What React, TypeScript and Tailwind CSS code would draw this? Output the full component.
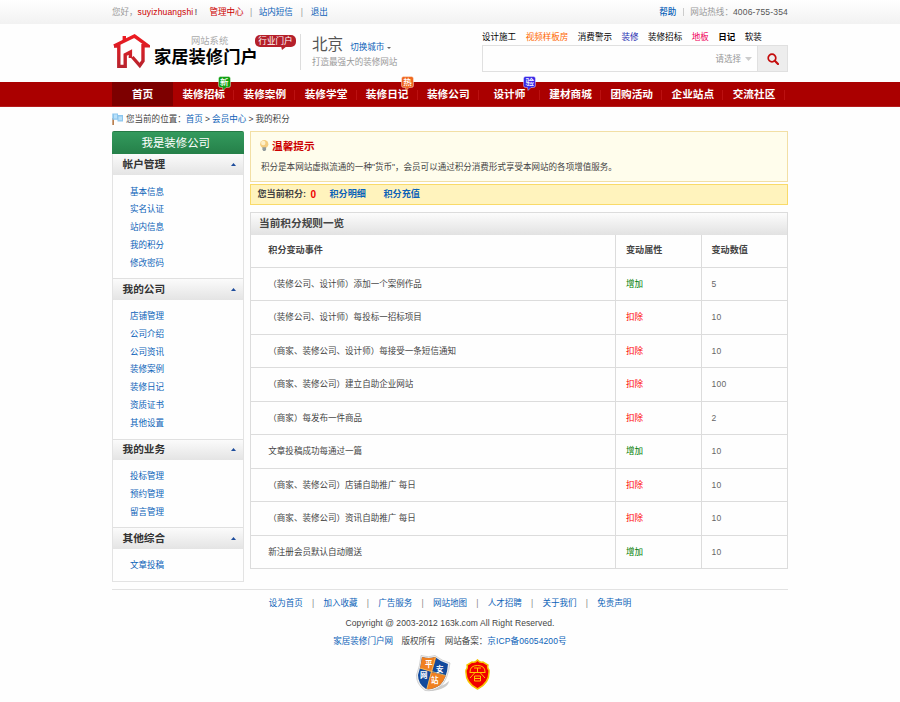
type NavItem = { label: string; tag?: string; kind?: 'new' | 'hot' | 'vip' }

const NAV: NavItem[] = [
  { label: '首页' },
  { label: '装修招标', tag: '新', kind: 'new' },
  { label: '装修案例' },
  { label: '装修学堂' },
  { label: '装修日记', tag: '热', kind: 'hot' },
  { label: '装修公司' },
  { label: '设计师', tag: '验', kind: 'vip' },
  { label: '建材商城' },
  { label: '团购活动' },
  { label: '企业站点' },
  { label: '交流社区' },
]

const TAG_FILL = { new: '#11a011', hot: '#f06a20', vip: '#3a2ae8' }

const HOT_WORDS = [
  { label: '设计施工', className: 'text-black' },
  { label: '视频样板房', className: 'text-[#ff6600]' },
  { label: '消费警示', className: 'text-black' },
  { label: '装修', className: 'text-[#1a2ab0]' },
  { label: '装修招标', className: 'text-black' },
  { label: '地板', className: 'text-[#f0005a]' },
  { label: '日记', className: 'font-bold text-black' },
  { label: '软装', className: 'text-black' },
]

const MENU = [
  { title: '帐户管理', items: ['基本信息', '实名认证', '站内信息', '我的积分', '修改密码'] },
  { title: '我的公司', items: ['店铺管理', '公司介绍', '公司资讯', '装修案例', '装修日记', '资质证书', '其他设置'] },
  { title: '我的业务', items: ['投标管理', '预约管理', '留言管理'] },
  { title: '其他综合', items: ['文章投稿'] },
]

const RULES = [
  { event: '（装修公司、设计师）添加一个案例作品', add: true, value: 5 },
  { event: '（装修公司、设计师）每投标一招标项目', add: false, value: 10 },
  { event: '（商家、装修公司、设计师）每接受一条短信通知', add: false, value: 10 },
  { event: '（商家、装修公司）建立自助企业网站', add: false, value: 100 },
  { event: '（商家）每发布一件商品', add: false, value: 2 },
  { event: '文章投稿成功每通过一篇', add: true, value: 10 },
  { event: '（商家、装修公司）店铺自助推广 每日', add: false, value: 10 },
  { event: '（商家、装修公司）资讯自助推广 每日', add: false, value: 10 },
  { event: '新注册会员默认自动赠送', add: true, value: 10 },
]

const FOOTER_LINKS = ['设为首页', '加入收藏', '广告服务', '网站地图', '人才招聘', '关于我们', '免责声明']

function TopBar() {
  return (
    <div className="h-6 bg-linear-to-b from-white to-[#f2f2f2]">
      <div className="mx-auto flex h-6 w-[676px] items-center justify-between whitespace-nowrap text-[#999]">
        <div className="flex items-center">
          <span className="w-[25.5px]">您好，</span>
          <span className="w-[57px] tracking-[0.14px] text-[#c00]">suyizhuangshi</span>
          <span className="w-[15px] font-bold text-[#777]">!</span>
          <a className="text-[#c00]">管理中心</a>
          <span className="w-[15px] text-center">|</span>
          <a className="text-[#0b62b8]">站内短信</a>
          <span className="w-[18px] text-center">|</span>
          <a className="text-[#0b62b8]">退出</a>
        </div>
        <div className="flex items-center">
          <a className="font-medium text-[#0b62b8]">帮助</a>
          <span className="mx-[6.5px] h-2 w-px bg-[#ccc]" />
          <span>网站热线：</span>
          <span className="tracking-[0.16px] text-[#555]">4006-755-354</span>
        </div>
      </div>
    </div>
  )
}

function Logo() {
  return (
    <div className="flex w-[188px] pt-[9px]">
      <svg className="mt-px h-[35px] w-[38px] shrink-0" viewBox="0 0 38 35">
        <defs>
          <linearGradient id="house" gradientUnits="userSpaceOnUse" x1="0" y1="0" x2="0" y2="35">
            <stop offset="0" stopColor="#f01a20" />
            <stop offset="1" stopColor="#b4242e" />
          </linearGradient>
        </defs>
        <g fill="none" stroke="url(#house)" strokeWidth="3.4">
          <path d="M2 12L22.5 2L36 11.8H31V27L27.8 31.5L20.3 23" />
          <path d="M2 12H6.8V32.4H13.2V20.8L18.4 18V24" />
          <path d="M12.3 8V2" />
        </g>
      </svg>
      <div className="ml-[4px] w-[101px]">
        <div className="mt-[2px] h-[13px] pl-[37px] text-[9.3px] leading-[13px] text-[#aaa]">网站系统</div>
        <div className="-mt-px text-[17.3px] font-bold leading-[20px] whitespace-nowrap text-black">家居装修门户</div>
      </div>
      <div className="relative mt-[2px] h-[12px] w-[41px] rounded-[5px] bg-[#b5202a] text-center text-[8.6px] leading-[12px] whitespace-nowrap text-white">
        行业门户
        <svg className="absolute top-[11px] left-[26px] h-[4px] w-[6px]" viewBox="0 0 6 4">
          <path d="M0 0H6L1 4Z" fill="#b5202a" />
        </svg>
      </div>
    </div>
  )
}

function Header() {
  return (
    <header className="mx-auto flex h-[58px] w-[676px]">
      <Logo />
      <div className="mt-[10px] h-[36px] border-l border-[#ddd] pl-[11px]">
        <div className="flex h-[20px] items-center">
          <span className="text-[15.6px] text-[#555]">北京</span>
          <span className="mt-[6px] ml-[7px] text-[#0b62b8]">切换城市</span>
          <svg className="mt-[7px] ml-[3px] h-[2px] w-[4px]" viewBox="0 0 4 2">
            <path d="M0 0H4L2 2Z" fill="#666" />
          </svg>
        </div>
        <div className="mt-[2px] leading-[12px] text-[#999]">打造最强大的装修网站</div>
      </div>
      <div className="ml-auto w-[306px] pt-[7px]">
        <div className="flex h-[12px] items-center gap-[9.5px] whitespace-nowrap">
          {HOT_WORDS.map(word => (
            <a key={word.label} className={word.className}>
              {word.label}
            </a>
          ))}
        </div>
        <div className="mt-[2px] flex h-[27px] border border-[#e0e0e0]">
          <div className="flex flex-1 items-center justify-end pt-px pr-[5px] text-[#999]">
            请选择
            <svg className="ml-[4px] h-[4px] w-[7px]" viewBox="0 0 7 4">
              <path d="M0 0H7L3.5 4Z" fill="#ccc" />
            </svg>
          </div>
          <button type="button" className="flex w-[30px] items-center justify-center border-l border-[#e0e0e0] bg-[#ededed]">
            <svg className="h-[12px] w-[12px]" viewBox="0 0 12 12" fill="none" stroke="#c40d0d">
              <circle cx="5" cy="5" r="3.8" strokeWidth="1.7" />
              <path d="M7.8 7.8L11 11" strokeWidth="2.2" strokeLinecap="round" />
            </svg>
          </button>
        </div>
      </div>
    </header>
  )
}

function NavTag({ tag, kind }: { tag: string; kind: 'new' | 'hot' | 'vip' }) {
  return (
    <span className="absolute -top-[6px] left-[44.5px] h-[15px] w-[13px]">
      <svg className="absolute inset-0 h-[15px] w-[13px]" viewBox="0 0 13 15">
        <path
          d="M2.5 .5H10.5Q12.5 .5 12.5 2.5V9.5Q12.5 11.5 10.5 11.5H8L5 14.5L4.5 11.5H2.5Q.5 11.5 .5 9.5V2.5Q.5 .5 2.5 .5Z"
          fill={TAG_FILL[kind]}
          stroke="#fff"
          strokeOpacity=".6"
          strokeWidth=".7"
        />
      </svg>
      <span className="relative block text-center text-[8.5px] font-medium leading-[12px] text-white">{tag}</span>
    </span>
  )
}

function Nav() {
  return (
    <nav className="h-[25px] border-b border-[#b51c1c] bg-[#aa0000]">
      <div className="mx-auto flex w-[676px]">
        {NAV.map((item, i) => (
          <a
            key={item.label}
            className={`relative h-[24px] w-[61.15px] text-center text-[10.67px] font-bold leading-[24.5px] text-white ${
              i === 0 ? 'bg-[#7d0000]' : ''
            }`}
          >
            {item.label}
            {i > 0 && <span className="absolute top-[8px] right-0 h-[10px] w-px bg-[#bb1111]" />}
            {item.tag && item.kind && <NavTag tag={item.tag} kind={item.kind} />}
          </a>
        ))}
      </div>
    </nav>
  )
}

function Breadcrumb() {
  return (
    <div className="flex h-[24px] items-center text-[#444]">
      <svg className="mr-[3px] -mt-px h-[12px] w-[11px]" viewBox="0 0 11 12">
        <path d="M.3 5H2V12H.3Z" fill="#b98050" />
        <path d="M.3 .5H6V2H11V8.5H5.5V6.8H.3Z" fill="#8cc6ee" />
        <path d="M2 1.5H5V5.5H2ZM6.5 3.5H10V7.3H6.5Z" fill="#b9e0f8" />
      </svg>
      <span>您当前的位置：</span>
      <a className="text-[#0b62b8]">首页</a>
      <span className="w-[9.3px] text-center">&gt;</span>
      <a className="text-[#0b62b8]">会员中心</a>
      <span className="w-[9.3px] text-center">&gt;</span>
      <span>我的积分</span>
    </div>
  )
}

function Sidebar() {
  return (
    <aside className="w-[131.5px]">
      <h2 className="h-[23px] rounded-t-[2px] border-t border-[#257a45] bg-linear-to-b from-[#339a5d] to-[#258049] pr-[4px] text-center text-[11.4px] leading-[22px] text-white">
        我是装修公司
      </h2>
      <div className="border-x border-b border-[#e3e3e3]">
        {MENU.map((group, i) => (
          <section key={group.title}>
            <h3
              className={`flex h-[21.3px] items-center justify-between bg-linear-to-b from-[#fbfbfb] to-[#e4e4e4] pr-[7px] pl-[9.5px] text-[10.67px] font-bold text-[#333] ${
                i > 0 ? 'border-t border-[#e0e0e0]' : ''
              }`}
            >
              {group.title}
              <svg className="h-[3px] w-[5px]" viewBox="0 0 5 3">
                <path d="M0 3H5L2.5 0Z" fill="#1d4c9c" />
              </svg>
            </h3>
            <ul className="pt-[8.3px] pb-[5.9px] pl-[17px]">
              {group.items.map(item => (
                <li key={item} className="h-[17.8px] leading-[17.8px] text-[#0b62b8]">
                  {item}
                </li>
              ))}
            </ul>
          </section>
        ))}
      </div>
    </aside>
  )
}

function RuleTable() {
  return (
    <div className="mt-[7px] border-x border-t border-[#dcdcdc]">
      <h2 className="h-[21.5px] bg-linear-to-b from-[#fcfcfc] to-[#e2e2e2] pl-[8px] text-[10.67px] font-bold leading-[20px] text-[#444]">
        当前积分规则一览
      </h2>
      <div className="grid h-[33px] grid-cols-[364px_85.5px_1fr] border-b border-[#dcdcdc] text-[9.1px] font-bold leading-[31.5px] text-[#444]">
        <div className="pl-[17.3px]">积分变动事件</div>
        <div className="border-l border-[#dcdcdc] pl-[10px]">变动属性</div>
        <div className="border-l border-[#dcdcdc] pl-[10px]">变动数值</div>
      </div>
      {RULES.map(rule => (
        <div
          key={rule.event}
          className="grid h-[33.52px] grid-cols-[364px_85.5px_1fr] border-b border-[#dcdcdc] leading-[33px]"
        >
          <div className="pl-[17.3px] text-[#444]">{rule.event}</div>
          <div className={`border-l border-[#dcdcdc] pl-[10px] ${rule.add ? 'text-[#008000]' : 'text-[#ff0000]'}`}>
            {rule.add ? '增加' : '扣除'}
          </div>
          <div className="border-l border-[#dcdcdc] pl-[10px] tracking-[0.3px] text-[#666]">{rule.value}</div>
        </div>
      ))}
    </div>
  )
}

function Content() {
  return (
    <main className="w-[538px]">
      <div className="h-[51px] border border-[#f2dfa5] bg-[#fffdec] pt-[6px]">
        <h2 className="flex h-[16px] items-center pl-[7.5px] text-[10.67px] font-bold text-[#c00]">
          <svg className="mr-[3px] -mt-[2px] h-[11px] w-[10.5px]" viewBox="0 0 11 12">
            <circle cx="5.5" cy="4.5" r="4.5" fill="#f5cd80" />
            <circle cx="4.4" cy="3.2" r="2.4" fill="#fff0c8" />
            <path d="M3.5 8H7.5V10.5L6.5 12H4.5L3.5 10.5Z" fill="#929b9c" />
          </svg>
          温馨提示
        </h2>
        <p className="mt-[7px] pl-[10px] leading-[13px] text-[#444]">
          积分是本网站虚拟流通的一种"货币"，会员可以通过积分消费形式享受本网站的各项增值服务。
        </p>
      </div>
      <div className="mt-[2px] flex h-[21px] items-center border border-[#f9da69] bg-[#fff3bd] pl-[6.5px] text-[9.1px] font-bold text-[#0b62b8]">
        <span className="w-[53px] text-[#444]">您当前积分:</span>
        <span className="w-[19px] text-[10px] text-[#e00]">0</span>
        <a className="w-[54px]">积分明细</a>
        <a>积分充值</a>
      </div>
      <RuleTable />
    </main>
  )
}

function SafeShield() {
  return (
    <svg className="h-[37px] w-[35px]" viewBox="0 0 35 37">
      <defs>
        <clipPath id="shield">
          <path d="M6 2Q13 4 19 2Q25 7 32 9Q31 23 24 30Q17 35 10 34Q2 29 2 20Q5 11 6 2Z" />
        </clipPath>
      </defs>
      <path d="M10 35Q27 32 33 26Q32 34 15 36Z" fill="#ccc" />
      <path
        d="M5 .5Q13 3 19 .5Q26 6 34 8Q32 24 25 31Q17 37 9 35.5Q0 29 .5 20Q4 11 5 .5Z"
        fill="#eee"
        stroke="#bbb"
        strokeWidth=".6"
      />
      <g clipPath="url(#shield)">
        <path d="M0 0H35V37H0Z" fill="#124a9c" />
        <path d="M0 0H21L16 17L0 12Z" fill="#f08020" />
        <path d="M15 17L35 22V37H10Z" fill="#f08020" />
        <path d="M20 0L10 37M0 12L35 22" stroke="#f6c66a" strokeWidth=".8" />
      </g>
      <g fill="#fff" fontSize="7.5" fontWeight="bold" fontFamily="Noto Sans CJK SC, sans-serif">
        <text x="9" y="12">平</text>
        <text x="20" y="17">安</text>
        <text x="4" y="23">网</text>
        <text x="15" y="28">站</text>
      </g>
    </svg>
  )
}

function PoliceShield() {
  return (
    <svg className="mt-[4px] h-[31px] w-[25px]" viewBox="0 0 25 31">
      <path
        d="M12.5 1Q15 4 18 3L23 6Q22 9 24 11Q25 24 12.5 30Q0 24 1 11Q3 9 2 6L7 3Q10 4 12.5 1Z"
        fill="#f00000"
        stroke="#f6c400"
        strokeWidth="1.5"
      />
      <g fill="none" stroke="#ffc400" strokeWidth="1">
        <path d="M5 13Q5 6.5 12.5 6.5Q20 6.5 20 13M9 9H16M12.5 9V13M4.5 13.5H20.5" />
        <path d="M10 13.5L5 19M15 13.5L20 19M9.5 17H15.5V22H9.5ZM9.5 19.5H15.5" />
      </g>
    </svg>
  )
}

function Footer() {
  return (
    <footer className="mx-auto mt-[7px] w-[676px] border-t border-[#e2e2e2] text-center text-[#444]">
      <div className="mt-[7px] flex h-[14px] items-center justify-center">
        {FOOTER_LINKS.map((label, i) => (
          <span key={label} className="flex">
            {i > 0 && <span className="w-[20.6px] text-[#888]">|</span>}
            <a className="text-[#0b62b8]">{label}</a>
          </span>
        ))}
      </div>
      <div className="mt-[6px] h-[12px] leading-[12px] tracking-[0.08px]">
        Copyright @ 2003-2012 163k.com All Right Reserved.
      </div>
      <div className="mt-[6px] flex h-[13px] items-center justify-center">
        <a className="text-[#0b62b8]">家居装修门户网</a>
        <span className="ml-[8.5px]">版权所有</span>
        <span className="ml-[9px]">网站备案：</span>
        <a className="tracking-[0.12px] text-[#0b62b8]">京ICP备06054200号</a>
      </div>
      <div className="mt-[7px] flex justify-center gap-[14px] pl-[5px]">
        <SafeShield />
        <PoliceShield />
      </div>
    </footer>
  )
}

export default function App() {
  return (
    <div className="min-h-[702px] bg-[#fefefe] font-['Liberation_Sans','Noto_Sans_CJK_SC',sans-serif] text-[8.54px] leading-[13px]">
      <TopBar />
      <Header />
      <Nav />
      <div className="mx-auto w-[676px]">
        <Breadcrumb />
        <div className="flex items-start justify-between">
          <Sidebar />
          <Content />
        </div>
      </div>
      <Footer />
    </div>
  )
}
